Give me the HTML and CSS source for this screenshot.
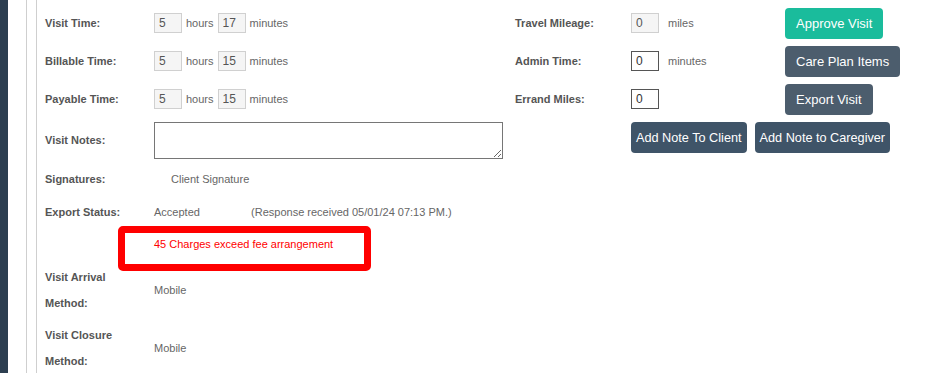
FILE: index.html
```html
<!DOCTYPE html>
<html lang="en">
<head>
  <meta charset="UTF-8" />
  <meta name="viewport" content="width=device-width, initial-scale=1.0" />
  <title>Visit Details</title>
  <link rel="stylesheet" href="styles.css">
</head>
<body>
  <div class="layout">
    <div class="sidebar"></div>
    <div class="outer">
      <div class="inner">

        <div class="visit-grid">
          <div class="label">Visit Time:</div>
          <div class="field">
            <input class="box" type="text" value="5" disabled> <span>hours</span>
            <input class="box" type="text" value="17" disabled> <span>minutes</span>
          </div>
          <div class="label">Travel Mileage:</div>
          <div class="field field-wide">
            <input class="box" type="text" value="0" disabled> <span>miles</span>
          </div>
          <div class="actions"><button class="btn btn-green">Approve Visit</button></div>

          <div class="label">Billable Time:</div>
          <div class="field">
            <input class="box" type="text" value="5" disabled> <span>hours</span>
            <input class="box" type="text" value="15" disabled> <span>minutes</span>
          </div>
          <div class="label">Admin Time:</div>
          <div class="field field-wide">
            <input class="box box-edit" type="text" value="0"> <span>minutes</span>
          </div>
          <div class="actions"><button class="btn">Care Plan Items</button></div>

          <div class="label">Payable Time:</div>
          <div class="field">
            <input class="box" type="text" value="5" disabled> <span>hours</span>
            <input class="box" type="text" value="15" disabled> <span>minutes</span>
          </div>
          <div class="label">Errand Miles:</div>
          <div class="field field-wide">
            <input class="box box-edit" type="text" value="0">
          </div>
          <div class="actions"><button class="btn">Export Visit</button></div>

          <div class="label notes-label">Visit Notes:</div>
          <div class="notes-cell"><textarea class="notes"></textarea></div>
          <div class="note-buttons">
            <button class="btn btn-note">Add Note To Client</button>
            <button class="btn btn-note">Add Note to Caregiver</button>
          </div>
        </div>

        <div class="detail-grid">
          <div class="label">Signatures:</div>
          <div class="value signature">Client Signature</div>

          <div class="label">Export Status:</div>
          <div class="value">
            <span class="status">Accepted</span>
            <span>(Response received 05/01/24 07:13 PM.)</span>
          </div>

          <div class="label"></div>
          <div class="value error-row">
            <span class="error-text">45 Charges exceed fee arrangement</span>
            <div class="highlight"></div>
          </div>

          <div class="label">Visit Arrival Method:</div>
          <div class="value">Mobile</div>

          <div class="label">Visit Closure Method:</div>
          <div class="value">Mobile</div>
        </div>

      </div>
    </div>
  </div>
</body>
</html>
```

FILE: styles.css
```css
body {
  font-family: "Liberation Sans", Arial, sans-serif;
  font-size: 11px;
  margin: 0;
  padding: 0;
  background-color: #ffffff;
  color: #666;
  overflow: hidden;
}

.layout {
  display: flex;
  height: 373px;
}

.sidebar {
  width: 8px;
  background: #2c3e50;
  flex-shrink: 0;
}

.outer {
  margin-left: 18px;
  padding-left: 9px;
  border-left: 1px solid #cfcfcf;
  flex: 1;
}

.inner {
  border-left: 1px solid #cfcfcf;
  padding-left: 8px;
  padding-top: 4px;
  height: 100%;
}

.label {
  font-weight: bold;
  color: #555;
}

/* top block */
.visit-grid {
  display: grid;
  grid-template-columns: 109px 361px 116px 154px auto;
  grid-template-rows: 38px 38px 38px auto;
  align-items: center;
}

.field {
  display: flex;
  align-items: center;
  gap: 4px;
}

.field-wide {
  gap: 9px;
}

.box {
  width: 28px;
  height: 20px;
  box-sizing: border-box;
  padding: 0 4px;
  font-family: "Liberation Sans", Arial, sans-serif;
  font-size: 12px;
  color: #555;
  background: #f5f5f5;
  border: 1px solid #d0d0d0;
  margin: 0;
}

.box-edit {
  background: #fff;
  border: 1px solid #555;
  color: #333;
}

.actions {
  display: flex;
}

.btn {
  font-family: "Liberation Sans", Arial, sans-serif;
  font-size: 13px;
  color: #fff;
  background: #4c5d6d;
  border: none;
  border-radius: 4px;
  height: 31px;
  padding: 0 11px;
  cursor: pointer;
}

.btn-green {
  background: #1abc9c;
}

.btn-note {
  background: #3f5468;
  padding: 0 5px;
  font-size: 12.7px;
}

.notes-label,
.notes-cell,
.note-buttons {
  align-self: start;
  margin-top: 4px;
}

.notes-label {
  line-height: 37px;
}

.notes-cell {
  grid-column: 2 / span 2;
  display: flex;
}

.notes {
  width: 349px;
  height: 37px;
  box-sizing: border-box;
  border: 1px solid #767676;
  margin: 0;
}

.note-buttons {
  grid-column: 4 / span 2;
  display: flex;
  gap: 8px;
}

/* lower block */
.detail-grid {
  display: grid;
  grid-template-columns: 109px 1fr;
  row-gap: 6.5px;
  line-height: 26px;
  margin-top: 7px;
}

.detail-grid .label {
  padding-right: 12px;
}

.detail-grid .value {
  align-self: center;
}

.signature {
  padding-left: 17px;
}

.status {
  display: inline-block;
  width: 94px;
}

.error-row {
  position: relative;
}

.error-text {
  color: #f00;
}

.highlight {
  position: absolute;
  left: -36px;
  top: -5px;
  width: 253px;
  height: 45px;
  box-sizing: border-box;
  border: 7px solid #f00;
  border-radius: 5px;
}
```
